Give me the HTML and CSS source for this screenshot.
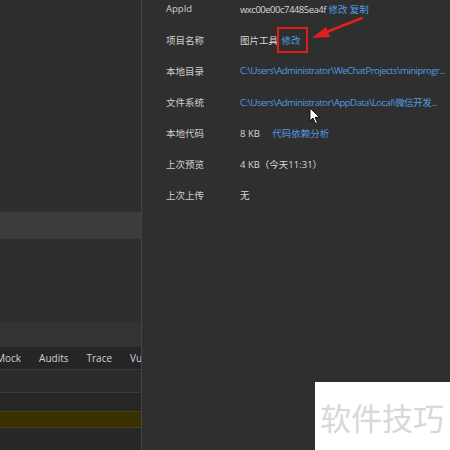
FILE: index.html
```html
<!DOCTYPE html>
<html>
<head>
<meta charset="utf-8">
<link rel="stylesheet" href="styles.css">
</head>
<body>
<div class="app">
  <div class="left">
    <div class="sp1"></div>
    <div class="band-sel"></div>
    <div class="sp2"></div>
    <div class="band-a"></div>
    <div class="tabs">
      <span class="tab tab-first">Mock</span>
      <span class="tab">Audits</span>
      <span class="tab">Trace</span>
      <span class="tab">Vu</span>
    </div>
    <div class="band-b"></div>
    <div class="band-c"></div>
    <div class="band-warn"></div>
    <div class="band-d"></div>
  </div>
  <div class="divider"></div>
  <div class="right">
    <div class="rows">
      <div class="row"><span class="label">AppId</span><span class="val"><span class="appid">wxc00e00c74485ea4f</span> <span class="link">修改</span> <span class="link">复制</span></span></div>
      <div class="row"><span class="label">项目名称</span><span class="val">图片工具 <span class="link boxed">修改</span></span></div>
      <div class="row"><span class="label">本地目录</span><span class="val link path">C:\Users\Administrator\WeChatProjects\miniprogr...</span></div>
      <div class="row"><span class="label">文件系统</span><span class="val link path">C:\Users\Administrator\AppData\Local\微信开发...</span></div>
      <div class="row"><span class="label">本地代码</span><span class="val">8 KB <span class="link gap">代码依赖分析</span></span></div>
      <div class="row"><span class="label">上次预览</span><span class="val">4 KB（今天11:31）</span></div>
      <div class="row"><span class="label">上次上传</span><span class="val">无</span></div>
    </div>
    <svg class="arrow" width="60" height="30" viewBox="0 0 60 30">
      <line x1="52" y1="2" x2="14" y2="17" stroke="#e0201c" stroke-width="2.5" stroke-linecap="round"/>
      <polygon points="2,22 16,11 20,21" fill="#e0201c"/>
    </svg>
    <svg class="cursor" width="12" height="18" viewBox="0 0 12 18">
      <path d="M1 1 L1 14 L4 11 L6.5 16.5 L8.5 15.6 L6 10.3 L10.3 10.3 Z" fill="#ffffff" stroke="#111" stroke-width="1"/>
    </svg>
    <div class="watermark">软件技巧</div>
  </div>
</div>
</body>
</html>
```
FILE: styles.css
```css
html, body {
  margin: 0;
  padding: 0;
  width: 450px;
  height: 450px;
  overflow: hidden;
  background: #2f2f2f;
}
.app {
  display: flex;
  width: 450px;
  height: 450px;
  font-family: "Open Sans", "Noto Sans CJK SC", sans-serif;
}
.left {
  width: 141px;
  flex-shrink: 0;
  display: flex;
  flex-direction: column;
  background: #2e2e2e;
  overflow: hidden;
}
.sp1 { height: 212px; }
.band-sel { height: 27px; background: #3c3c3c; }
.sp2 { height: 83px; }
.band-a { height: 25px; background: #333333; }
.tabs {
  height: 22px;
  background: #252527;
  border-bottom: 1px solid #3a3a3c;
  display: flex;
  align-items: center;
  white-space: nowrap;
  font-size: 10px;
  color: #d2d2d2;
  overflow: hidden;
}
.tab { margin-right: 18px; flex-shrink: 0; }
.tab-first { margin-left: -4px; }
.band-b { height: 22px; background: #2b2b2d; border-bottom: 1px solid #3a3a3a; }
.band-c { height: 18px; background: #262626; }
.band-warn {
  height: 15px;
  background: #3a3000;
  border-top: 1px solid #4a4110;
  border-bottom: 1px solid #4a4110;
}
.band-d { flex: 1; background: #272727; }
.divider { width: 1px; flex-shrink: 0; background: #434343; }
.right {
  flex: 1;
  min-width: 0;
  position: relative;
  background: #2f2f2f;
  padding-left: 24px;
  overflow: hidden;
}
.rows {
  margin-top: -7px;
  display: flex;
  flex-direction: column;
}
.row {
  height: 31px;
  display: flex;
  align-items: center;
  font-size: 9.5px;
  color: #d4d4d4;
  white-space: nowrap;
}
.label { width: 74px; flex-shrink: 0; color: #cfcfcf; }
.val { color: #d8d8d8; min-width: 0; }
.appid { letter-spacing: -0.5px; }
.link { color: #4f9be0; }
.path { letter-spacing: -0.5px; }
.gap { margin-left: 10px; }
.boxed {
  display: inline-block;
  outline: 2.5px solid #d91e1e;
  outline-offset: 0;
  padding: 4px 6px 4px 2px;
  margin-left: -1px;
}
.arrow {
  position: absolute;
  left: 168px;
  top: 16px;
}
.cursor {
  position: absolute;
  left: 167px;
  top: 107px;
}
.watermark {
  position: absolute;
  left: 173px;
  top: 382px;
  width: 135px;
  height: 68px;
  background: #ffffff;
  color: #d8d8d8;
  font-size: 31px;
  font-family: "Noto Sans CJK SC", sans-serif;
  display: flex;
  align-items: center;
  padding-left: 5px;
  box-sizing: border-box;
}
```
